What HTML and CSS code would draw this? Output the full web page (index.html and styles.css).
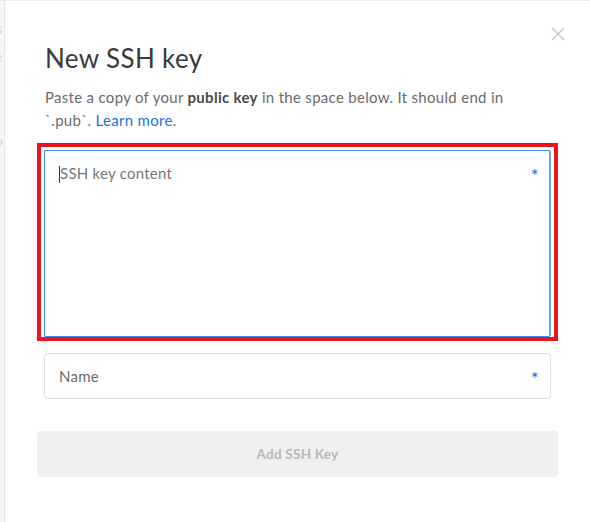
FILE: index.html
```html
<!DOCTYPE html>
<html>
<head>
<meta charset="utf-8">
<link rel="stylesheet" href="styles.css">
</head>
<body>
<div class="page">
  <div class="backdrop">
    <span class="bg-char c1">S</span>
    <span class="bg-char c2">e</span>
    <span class="bg-char c3">o</span>
  </div>
  <div class="modal">
    <button class="close" aria-label="Close">
      <svg width="14" height="14" viewBox="0 0 14 14"><path d="M1 1L13 13M13 1L1 13" stroke="#c4c4c4" stroke-width="1.4" fill="none"/></svg>
    </button>
    <h1 class="title">New SSH key</h1>
    <p class="intro">Paste a copy of your <strong>public key</strong> in the space below. It should end in `.pub`. <a class="link" href="#">Learn more</a>.</p>
    <div class="field-wrap">
      <div class="textarea">
        <span class="caret"></span><span class="placeholder">SSH key content</span>
        <span class="req">*</span>
      </div>
      <div class="highlight"></div>
    </div>
    <div class="input">
      <span class="placeholder">Name</span>
      <span class="req">*</span>
    </div>
    <button class="submit">Add SSH Key</button>
  </div>
</div>
</body>
</html>
```
FILE: styles.css
```css
html, body {
  margin: 0;
  padding: 0;
}
body {
  background: #ececec;
  font-family: "Lato", "Noto Sans", sans-serif;
  width: 590px;
  height: 522px;
  overflow: hidden;
}
.page {
  display: flex;
  height: 521px;
  margin-top: 1px;
}
.backdrop {
  width: 4px;
  background: #f7f7f7;
  border-right: 1px solid #e4e4e4;
  position: relative;
  overflow: hidden;
  flex: none;
}
.bg-char {
  position: absolute;
  left: -4px;
  font-size: 12px;
  color: #cfcfcf;
  font-family: "Lato", sans-serif;
}
.c1 { top: 21px; }
.c2 { top: 48px; }
.c3 { top: 132px; }
.modal {
  position: relative;
  flex: 1;
  background: #fff;
  padding: 42px 32px 0 32px;
  box-sizing: border-box;
}
.close {
  position: absolute;
  top: 26px;
  right: 25px;
  border: 0;
  background: none;
  padding: 0;
  width: 14px;
  height: 14px;
  cursor: pointer;
}
.close svg { display: block; }
.title {
  margin: 0 0 0 8px;
  font-size: 26px;
  line-height: 30px;
  font-weight: 400;
  letter-spacing: 0.35px;
  color: #3a3a3a;
}
.intro {
  margin: 13px 24px 0 8px;
  font-size: 15px;
  line-height: 23px;
  letter-spacing: 0.3px;
  color: #6a6a6a;
}
.intro strong {
  color: #4a4a4a;
  font-weight: 700;
}
.link {
  color: #1a73e0;
  text-decoration: none;
}
.field-wrap {
  position: relative;
  margin: 18px 7px 0 7px;
}
.textarea {
  height: 187px;
  box-sizing: border-box;
  border: 1px solid #3389ec;
  border-right: 2px solid #6aa6ee;
  border-radius: 2px;
  padding: 12px 11px 12px 14px;
  display: flex;
  align-items: flex-start;
  font-size: 15px;
  line-height: 20px;
  letter-spacing: 0.25px;
}
.caret {
  width: 1px;
  height: 17px;
  background: #333;
  margin-top: 3px;
  flex: none;
}
.placeholder {
  color: #767676;
  flex: 1;
}
.req {
  color: #2f7de1;
  font-family: "DejaVu Sans", sans-serif;
  font-weight: 700;
  font-size: 12px;
  line-height: 20px;
  position: relative;
  top: 1px;
}
.highlight {
  position: absolute;
  left: -7px;
  top: -7px;
  right: -7px;
  bottom: -4px;
  border: 4.5px solid #e8141f;
  pointer-events: none;
}
.input {
  margin: 16px 7px 0 7px;
  height: 46px;
  box-sizing: border-box;
  border: 1px solid #dcdcdc;
  border-radius: 4px;
  padding: 0 12px 0 14px;
  display: flex;
  align-items: center;
  font-size: 15px;
  letter-spacing: 0.25px;
}
.input .placeholder { color: #6a6a6a; }
.input .req { top: 1px; }
.submit {
  display: block;
  width: 100%;
  margin-top: 32px;
  height: 46px;
  border: 0;
  border-radius: 4px;
  background: #f0f0f0;
  color: #b8b8b8;
  font-family: "Lato", "Noto Sans", sans-serif;
  font-weight: 700;
  font-size: 13.5px;
  letter-spacing: 0.25px;
}
```
